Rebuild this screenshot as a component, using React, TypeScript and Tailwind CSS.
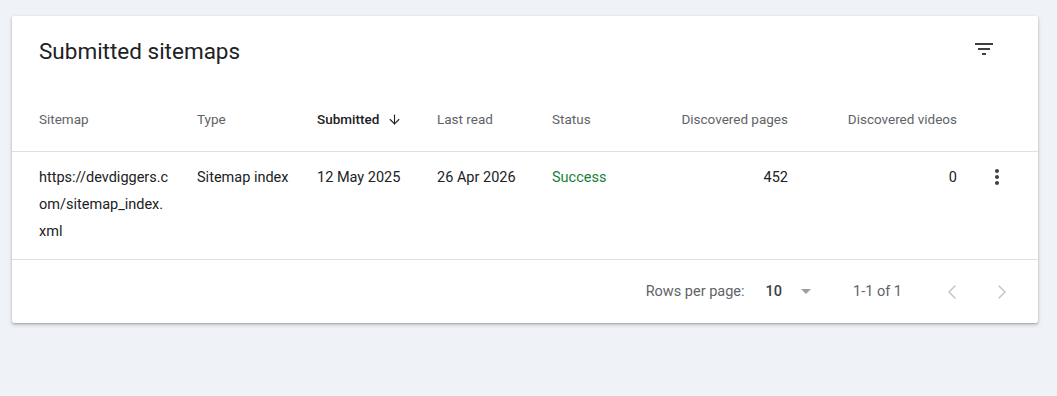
import { ArrowDown, ChevronLeft, ChevronRight } from "lucide-react";

const FilterIcon = () => (
  <svg viewBox="0 0 24 24" className="w-6 h-6 fill-[#3c4043]">
    <path d="M10 18h4v-2h-4v2zM3 6v2h18V6H3zm3 7h12v-2H6v2z" />
  </svg>
);

const MoreIcon = () => (
  <svg viewBox="0 0 24 24" className="w-6 h-6 fill-[#3c4043]">
    <path d="M12 8c1.1 0 2-.9 2-2s-.9-2-2-2-2 .9-2 2 .9 2 2 2zm0 2c-1.1 0-2 .9-2 2s.9 2 2 2 2-.9 2-2-.9-2-2-2zm0 6c-1.1 0-2 .9-2 2s.9 2 2 2 2-.9 2-2-.9-2-2-2z" />
  </svg>
);

const App = () => {
  return (
    <div className="min-h-screen bg-[#eff2f6] px-3 pt-4 font-['Roboto',sans-serif]">
      <div className="w-[1026px] bg-white rounded-[2px] shadow-[0_1px_2px_rgba(60,64,67,0.3),0_2px_4px_rgba(60,64,67,0.2)]">
        {/* Title */}
        <div className="h-[71px] flex items-center justify-between pl-[27px] pr-[42px]">
          <h2 className="text-[22.5px] text-[#202124] pt-[1px]">Submitted sitemaps</h2>
          <button className="-mt-[5px]">
            <FilterIcon />
          </button>
        </div>

        {/* Table header */}
        <div className="h-[65px] flex items-center pl-[27px] pt-[1px] text-[13.5px] text-[#5f6368] border-b border-[#e0e0e0]">
          <div className="w-[158px]">Sitemap</div>
          <div className="w-[120px]">Type</div>
          <div className="w-[120px] flex items-center gap-[8px] text-[#202124] font-medium">
            Submitted
            <ArrowDown className="w-[15px] h-[15px] stroke-[1.75]" />
          </div>
          <div className="w-[115px]">Last read</div>
          <div className="w-[100px]">Status</div>
          <div className="w-[136px] text-right">Discovered pages</div>
          <div className="w-[169px] text-right">Discovered videos</div>
        </div>

        {/* Row */}
        <div className="flex items-start pl-[27px] pt-[12px] pb-[14px] text-[14.5px] leading-[27px] text-[#202124] border-b border-[#e0e0e0]">
          <div className="w-[158px]">
            <span className="block">https://devdiggers.c</span>
            <span className="block">om/sitemap_index.</span>
            <span className="block">xml</span>
          </div>
          <div className="w-[120px]">Sitemap index</div>
          <div className="w-[120px]">12 May 2025</div>
          <div className="w-[115px]">26 Apr 2026</div>
          <div className="w-[100px] text-[#188038]">Success</div>
          <div className="w-[136px] text-right">452</div>
          <div className="w-[169px] text-right">0</div>
          <div className="ml-[28px] pt-[1px]">
            <MoreIcon />
          </div>
        </div>

        {/* Footer */}
        <div className="h-[63px] flex items-center justify-end pr-[24px] text-[14.5px] text-[#5f6368]">
          <span>Rows per page:</span>
          <span className="ml-[21px] text-[#3c4043] font-medium">10</span>
          <span className="ml-[19px] w-0 h-0 border-l-[5px] border-r-[5px] border-t-[5px] border-l-transparent border-r-transparent border-t-[#9aa0a6]" />
          <span className="ml-[42px]">1-1 of 1</span>
          <ChevronLeft className="ml-[38px] w-6 h-6 text-[#c4c7c5] stroke-[1.5]" />
          <ChevronRight className="ml-[26px] w-6 h-6 text-[#c4c7c5] stroke-[1.5]" />
        </div>
      </div>
    </div>
  );
};

export default App;
